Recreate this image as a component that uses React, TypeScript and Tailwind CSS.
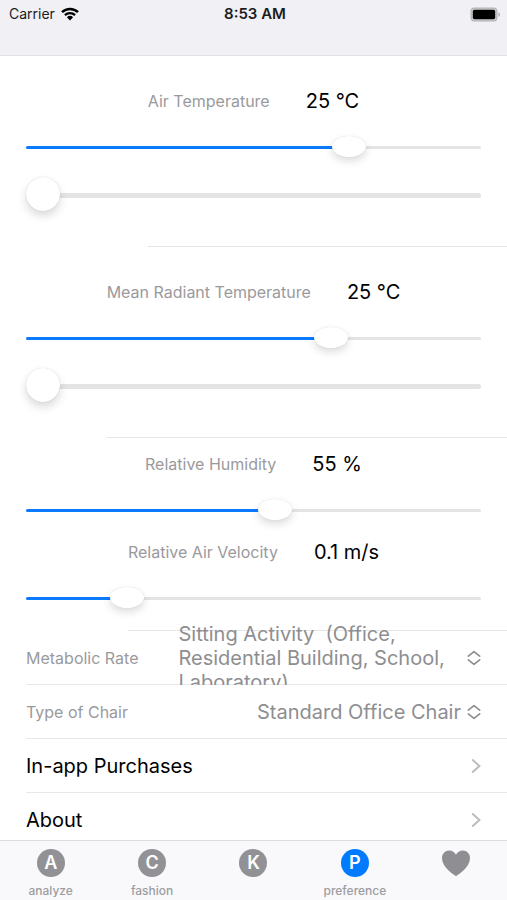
import { useState, type CSSProperties } from "react";

interface SliderProps {
  label: string;
  min: number;
  max: number;
  step?: number;
  value: number;
  onChange: (value: number) => void;
}

function Slider({ label, min, max, step = 1, value, onChange }: SliderProps) {
  const fill = `${((value - min) / (max - min)) * 100}%`;

  return (
    <input
      type="range"
      aria-label={label}
      min={min}
      max={max}
      step={step}
      value={value}
      onChange={(e) => onChange(Number(e.target.value))}
      style={{ "--fill": fill } as CSSProperties}
      className="block h-9 w-full cursor-pointer appearance-none bg-transparent
        [&::-webkit-slider-runnable-track]:h-[3px] [&::-webkit-slider-runnable-track]:rounded-full
        [&::-webkit-slider-runnable-track]:bg-[linear-gradient(to_right,#0a7aff_var(--fill),#e4e4e5_var(--fill))]
        [&::-webkit-slider-thumb]:mt-[-10px] [&::-webkit-slider-thumb]:h-[21px] [&::-webkit-slider-thumb]:w-[34px]
        [&::-webkit-slider-thumb]:appearance-none [&::-webkit-slider-thumb]:rounded-[50%] [&::-webkit-slider-thumb]:bg-white
        [&::-webkit-slider-thumb]:shadow-[0_0_1px_rgba(0,0,0,0.16),0_4px_9px_rgba(0,0,0,0.14)]"
    />
  );
}

function OffsetSlider({ label, min, max, value, onChange }: SliderProps) {
  return (
    <input
      type="range"
      aria-label={label}
      min={min}
      max={max}
      value={value}
      onChange={(e) => onChange(Number(e.target.value))}
      className="block h-9 w-full cursor-pointer appearance-none bg-transparent
        [&::-webkit-slider-runnable-track]:h-[5px] [&::-webkit-slider-runnable-track]:rounded-full
        [&::-webkit-slider-runnable-track]:bg-[#e4e4e5]
        [&::-webkit-slider-thumb]:mt-[-16px] [&::-webkit-slider-thumb]:size-[34px]
        [&::-webkit-slider-thumb]:appearance-none [&::-webkit-slider-thumb]:rounded-full [&::-webkit-slider-thumb]:bg-white
        [&::-webkit-slider-thumb]:shadow-[0_0_1px_rgba(0,0,0,0.2),0_5px_10px_rgba(0,0,0,0.15)]"
    />
  );
}

function Heading({ label, value }: { label: string; value: string }) {
  return (
    <div className="col-start-2 flex h-9 items-center gap-9 whitespace-nowrap">
      <span className="text-base text-[#9a9a9d]">{label}</span>
      <span className="text-xl text-black">{value}</span>
    </div>
  );
}

function Divider() {
  return <div className="col-span-2 col-start-2 h-px bg-[#e5e5e7]" />;
}

function UpDownIcon() {
  return (
    <svg
      className="h-4 w-3.5 shrink-0 text-[#8e8e91]"
      viewBox="0 0 14 16"
      fill="none"
      stroke="currentColor"
      strokeWidth={1.6}
      strokeLinecap="round"
      strokeLinejoin="round"
      aria-hidden="true"
    >
      <path d="M1.300 6.200 7 1.600l5.700 4.600M1.300 9.800 7 14.400l5.700-4.600" />
    </svg>
  );
}

function LinkRow({ label }: { label: string }) {
  return (
    <a
      href="#"
      className="relative ml-[26px] flex h-[54px] items-center justify-between border-b border-[#e8e8ea] bg-white pr-[26px] text-xl text-black"
    >
      {label}
      <svg
        className="h-4 w-2.5 text-[#bcbcbf]"
        viewBox="0 0 10 16"
        fill="none"
        stroke="currentColor"
        strokeWidth={2}
        aria-hidden="true"
      >
        <path d="M1.200 1.500 8.400 8l-7.200 6.500" />
      </svg>
    </a>
  );
}

const activities = [
  "Sitting Activity  (Office, Residential Building, School, Laboratory)",
];

const chairs = ["Standard Office Chair"];

const tabs = [
  { letter: "A", label: "analyze" },
  { letter: "C", label: "fashion" },
  { letter: "K", label: "" },
  { letter: "P", label: "preference" },
];

export default function App() {
  const [air, setAir] = useState(25);
  const [airOffset, setAirOffset] = useState(0);
  const [radiant, setRadiant] = useState(25);
  const [radiantOffset, setRadiantOffset] = useState(0);
  const [humidity, setHumidity] = useState(55);
  const [velocity, setVelocity] = useState(0.1);
  const [activity, setActivity] = useState(activities[0]);
  const [chair, setChair] = useState(chairs[0]);
  const [tab, setTab] = useState("P");

  return (
    <div className="flex h-screen flex-col bg-white font-[Inter,sans-serif]">
      <header className="h-14 shrink-0 border-b border-[#e2e2e6] bg-[#f0f0f5]">
        <div className="grid h-7 grid-cols-3 items-center pl-[9px] pr-1.5 text-sm text-[#1c1c1e]">
          <div className="flex items-center gap-1.5">
            Carrier
            <svg className="h-3.5 w-[18px]" viewBox="0 0 18 14" fill="none" stroke="#000" aria-hidden="true">
              <path d="M1 5.1a11.6 11.6 0 0 1 16 0" strokeWidth={2.5} />
              <path d="M3.9 8.2a7.4 7.4 0 0 1 10.2 0" strokeWidth={2.3} />
              <path d="M9 13.4 5.9 10.3a4.5 4.5 0 0 1 6.2 0z" fill="#000" stroke="none" />
            </svg>
          </div>
          <span className="text-center text-[15px] font-semibold">8:53 AM</span>
          <svg className="h-[15px] w-[31px] justify-self-end" viewBox="0 0 31 15" aria-hidden="true">
            <rect x="0.500" y="0.500" width="27" height="14" rx="4" fill="#b4b4b8" />
            <rect x="1.800" y="1.800" width="24.400" height="11.400" rx="2.800" fill="#cfcfd3" />
            <rect x="2.800" y="2.800" width="22.400" height="9.400" rx="1.600" fill="#000" />
            <path d="M28.300 5.200c2.400.8 2.400 3.800 0 4.600z" fill="#b4b4b8" />
          </svg>
        </div>
      </header>

      <main className="min-h-0 flex-1 overflow-y-auto [scrollbar-width:none]">
        <section className="grid grid-cols-[1fr_auto_1fr] pt-[27px]">
          <Heading label="Air Temperature" value={`${air} °C`} />
          <div className="col-span-3 flex flex-col gap-3 px-[26px] pb-[33px] pt-2.5">
            <Slider label="Air Temperature" min={9} max={31} value={air} onChange={setAir} />
            <OffsetSlider label="Air Temperature offset" min={0} max={10} value={airOffset} onChange={setAirOffset} />
          </div>
          <Divider />
        </section>

        <section className="grid grid-cols-[1fr_auto_1fr] pt-[27px]">
          <Heading label="Mean Radiant Temperature" value={`${radiant} °C`} />
          <div className="col-span-3 flex flex-col gap-3 px-[26px] pb-[33px] pt-2.5">
            <Slider label="Mean Radiant Temperature" min={12} max={31} value={radiant} onChange={setRadiant} />
            <OffsetSlider
              label="Mean Radiant Temperature offset"
              min={0}
              max={10}
              value={radiantOffset}
              onChange={setRadiantOffset}
            />
          </div>
          <Divider />
        </section>

        <section className="grid grid-cols-[1fr_auto_1fr] pt-2">
          <Heading label="Relative Humidity" value={`${humidity} %`} />
          <div className="col-span-3 px-[26px] pb-1.5 pt-2.5">
            <Slider label="Relative Humidity" min={0} max={100} value={humidity} onChange={setHumidity} />
          </div>
        </section>

        <section className="grid grid-cols-[1fr_auto_1fr]">
          <Heading label="Relative Air Velocity" value={`${velocity} m/s`} />
          <div className="col-span-3 px-[26px] pb-3.5 pt-2.5">
            <Slider label="Relative Air Velocity" min={0} max={0.5} step={0.1} value={velocity} onChange={setVelocity} />
          </div>
          <Divider />
        </section>

        {/* the long activity name runs over the row above and is cut by the row below */}
        <div className="relative ml-[26px] flex h-[54px] items-center border-b border-[#e8e8ea] pr-[26px]">
          <label htmlFor="activity" className="shrink-0 text-base text-[#9a9a9d]">
            Metabolic Rate
          </label>
          <span className="ml-10 flex-1 whitespace-pre-wrap text-xl leading-6 text-[#8e8e91]" aria-hidden="true">
            {activity}
          </span>
          <UpDownIcon />
          <select
            id="activity"
            value={activity}
            onChange={(e) => setActivity(e.target.value)}
            className="absolute inset-0 w-full cursor-pointer opacity-0"
          >
            {activities.map((name) => (
              <option key={name}>{name}</option>
            ))}
          </select>
        </div>

        <div className="relative bg-white">
          <div className="ml-[26px] flex h-[54px] items-center border-b border-[#e8e8ea] pr-[26px]">
            <label htmlFor="chair" className="shrink-0 text-base text-[#9a9a9d]">
              Type of Chair
            </label>
            <select
              id="chair"
              value={chair}
              onChange={(e) => setChair(e.target.value)}
              className="mr-1.5 min-w-0 flex-1 cursor-pointer appearance-none bg-transparent text-right text-xl text-[#8e8e91]"
            >
              {chairs.map((name) => (
                <option key={name}>{name}</option>
              ))}
            </select>
            <UpDownIcon />
          </div>
        </div>

        <LinkRow label="In-app Purchases" />
        <LinkRow label="About" />
      </main>

      <nav className="grid h-[60px] shrink-0 grid-cols-5 border-t border-[#dcdce0] bg-[#f9f9fc]">
        {tabs.map(({ letter, label }) => (
          <button
            key={letter}
            type="button"
            onClick={() => setTab(letter)}
            className="flex flex-col items-center gap-[5px] pt-2 text-xs font-medium leading-[18px] text-[#9d9da1]"
          >
            <span
              className={`flex size-7 items-center justify-center rounded-full text-lg font-semibold text-white ${
                tab === letter ? "bg-[#007aff]" : "bg-[#929296]"
              }`}
            >
              {letter}
            </span>
            {label}
          </button>
        ))}
        <button
          type="button"
          aria-label="Favorites"
          onClick={() => setTab("heart")}
          className={`flex justify-center pt-2 ${tab === "heart" ? "text-[#007aff]" : "text-[#8e8e93]"}`}
        >
          <svg className="size-7" viewBox="0 0 28 28" fill="currentColor" aria-hidden="true">
            <path d="M14 27.2C11.6 25.4 0 18.6 0 9.3 0 4.8 3.1 1.6 7.2 1.6c3 0 5.5 1.6 6.8 4.2 1.3-2.6 3.8-4.2 6.8-4.2 4.1 0 7.2 3.2 7.2 7.7 0 9.3-11.6 16.1-14 17.9z" />
          </svg>
        </button>
      </nav>
    </div>
  );
}
